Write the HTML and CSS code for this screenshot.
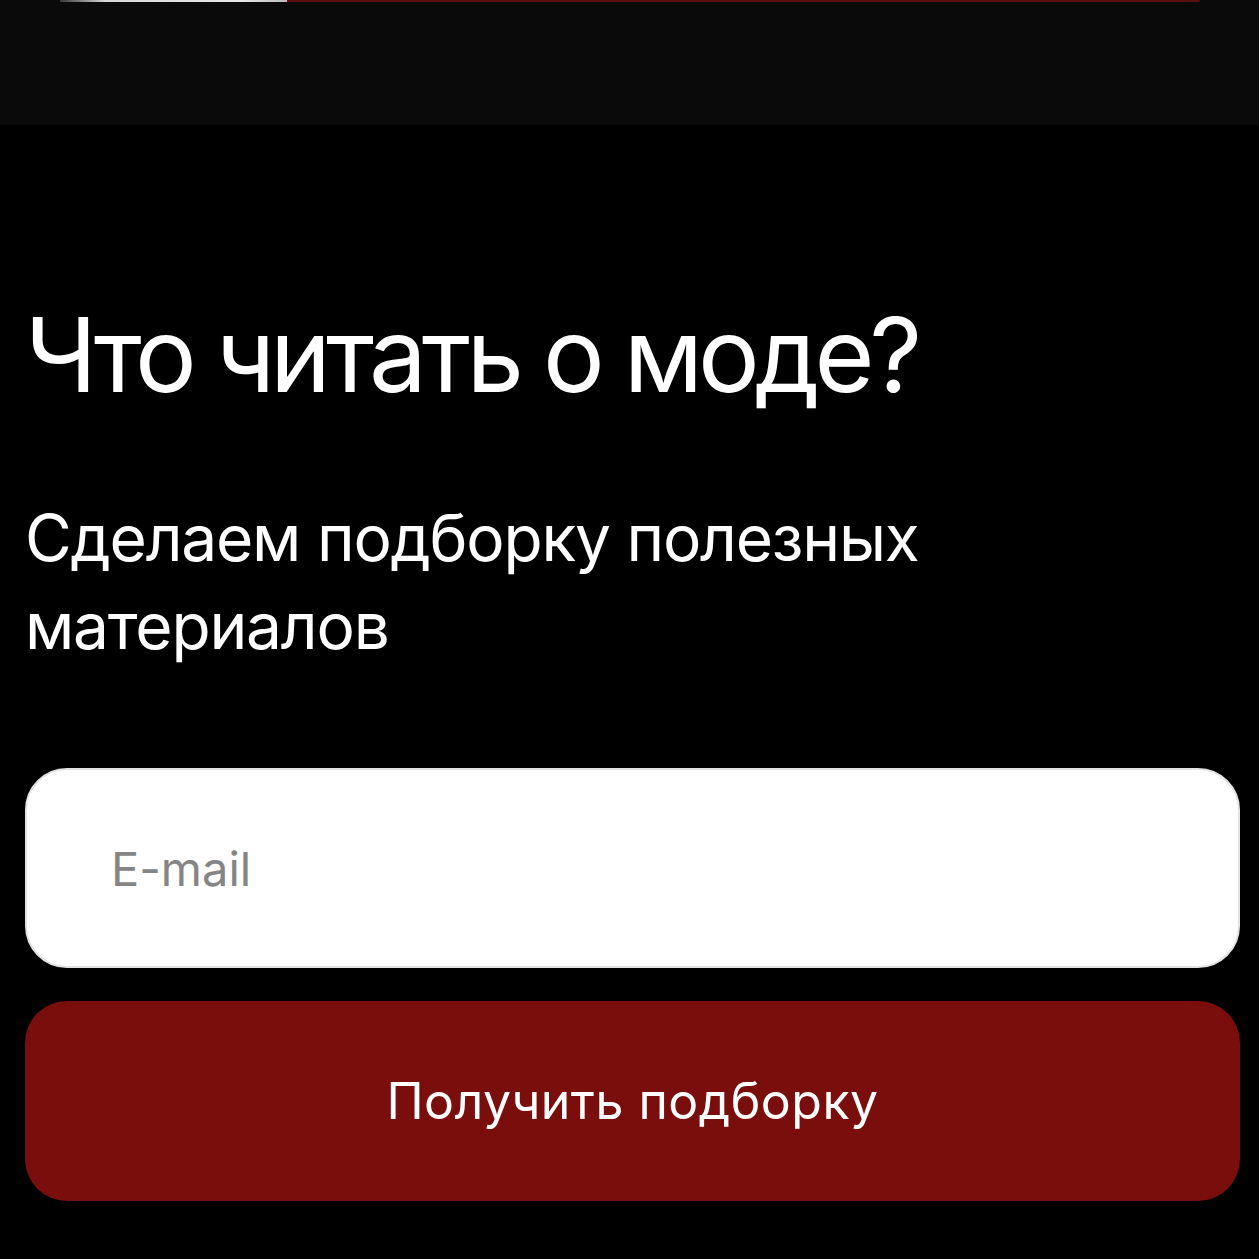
FILE: index.html
```html
<!DOCTYPE html>
<html lang="ru">
<head>
<meta charset="utf-8">
<title>Что читать о моде?</title>
<link rel="stylesheet" href="styles.css">
</head>
<body>
<header class="topbar">
  <div class="topbar-edge">
    <span class="edge-light"></span>
    <span class="edge-red"></span>
  </div>
</header>
<main class="promo">
  <h1 class="promo-title">Что читать о моде?</h1>
  <p class="promo-text">Сделаем подборку полезных материалов</p>
  <form class="promo-form">
    <input class="promo-input" type="email" placeholder="E-mail">
    <button class="promo-button" type="button">Получить подборку</button>
  </form>
</main>
</body>
</html>
```

FILE: styles.css
```css
* { box-sizing: border-box; }
html, body {
  margin: 0;
  padding: 0;
  background: #000;
  color: #fff;
  font-family: Inter, "Noto Sans", sans-serif;
}
body { height: 1259px; overflow: hidden; }

.topbar {
  height: 125px;
  background: #0a0a0a;
}
.topbar-edge {
  display: flex;
  margin: 0 59px 0 60px;
  height: 2px;
}
.edge-light {
  width: 227px;
  background: linear-gradient(90deg, #3a3a3a, #d8d8d8 20%, #e8e8e8 80%, #bbb);
}
.edge-red {
  flex: 1;
  background: #5a0f0f;
  border-radius: 0 0 2px 0;
}

.promo {
  padding: 178px 19px 0 25px;
}
.promo-title {
  margin: 0;
  font-weight: 400;
  font-size: 103px;
  line-height: 1;
  letter-spacing: -5px;
}
.promo-text {
  margin: 88px 0 0;
  font-size: 64px;
  line-height: 88px;
  letter-spacing: -1.2px;
  max-width: 920px;
}
.promo-form {
  display: flex;
  flex-direction: column;
  gap: 33px;
  margin-top: 98px;
}
.promo-input {
  height: 200px;
  border-radius: 42px;
  border: 2px solid #e3e3e3;
  background: #fff;
  padding: 0 0 0 84px;
  font-family: Inter, "Noto Sans", sans-serif;
  font-size: 47px;
  color: #333;
  outline: none;
}
.promo-input::placeholder { color: #858585; }
.promo-button {
  height: 200px;
  border: 0;
  border-radius: 42px;
  background: #7a0e0c;
  color: #fff;
  font-family: Inter, "Noto Sans", sans-serif;
  font-size: 50px;
  letter-spacing: 0.5px;
}
```
